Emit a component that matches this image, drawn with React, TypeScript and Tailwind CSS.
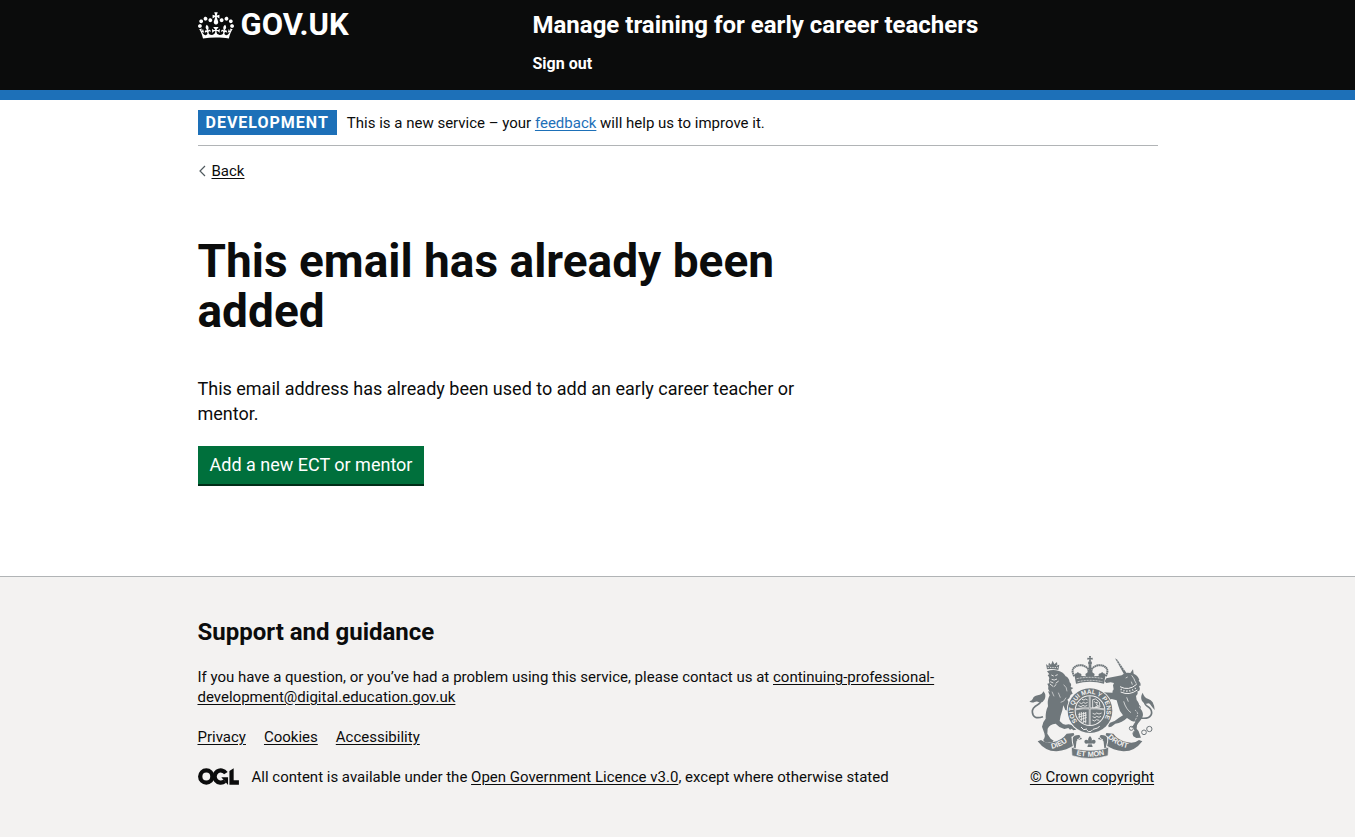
import type { ReactNode } from "react";

function Crown() {
  return (
    <svg viewBox="0 0 132 97" className="h-[27px] w-9 shrink-0" fill="currentColor" aria-hidden="true">
      <path
        fillRule="evenodd"
        d="M25 30.2c3.5 1.5 7.7-.2 9.1-3.7 1.5-3.6-.2-7.8-3.9-9.2-3.6-1.4-7.6.3-9.1 3.9-1.4 3.5.3 7.5 3.9 9zM9 39.5c3.6 1.5 7.8-.2 9.1-3.7 1.5-3.6-.2-7.8-3.9-9.1-3.6-1.5-7.6.2-9.1 3.8-1.4 3.5.3 7.5 3.9 9zM4.4 57.2c3.5 1.5 7.7-.2 9.1-3.8 1.5-3.6-.2-7.7-3.9-9.1-3.5-1.5-7.6.3-9.1 3.8-1.4 3.5.3 7.6 3.9 9.1zm38.3-21.4c3.5 1.5 7.7-.2 9.1-3.8 1.5-3.6-.2-7.7-3.9-9.1-3.6-1.5-7.6.3-9.1 3.8-1.3 3.6.4 7.7 3.9 9.1zm64.4-5.6c-3.6 1.5-7.8-.2-9.1-3.7-1.5-3.6.2-7.8 3.8-9.2 3.6-1.4 7.7.3 9.2 3.9 1.3 3.5-.4 7.5-3.9 9zm15.9 9.3c-3.6 1.5-7.7-.2-9.1-3.7-1.5-3.6.2-7.8 3.7-9.1 3.6-1.5 7.7.2 9.2 3.8 1.5 3.5-.3 7.5-3.8 9zm4.7 17.7c-3.6 1.5-7.8-.2-9.2-3.8-1.5-3.6.2-7.7 3.9-9.1 3.6-1.5 7.7.3 9.2 3.8 1.3 3.5-.4 7.6-3.9 9.1zM89.3 35.8c-3.6 1.5-7.8-.2-9.2-3.8-1.4-3.6.2-7.7 3.9-9.1 3.6-1.5 7.7.3 9.2 3.8 1.4 3.6-.3 7.7-3.9 9.1zM69.7 17.7l8.9 4.7V9.3l-8.9 2.8c-.2-.3-.5-.6-.9-.9L72.4 0H59.6l3.5 11.2c-.3.3-.6.5-.9.9l-8.8-2.8v13.1l8.8-4.7c.3.3.6.7.9.9l-5 15.4v.1c-.2.8-.4 1.6-.4 2.4 0 4.1 3.1 7.5 7 8.1h.2c.3 0 .7.1 1 .1.4 0 .7 0 1-.1h.2c4-.6 7.1-4.1 7.1-8.1 0-.8-.1-1.7-.4-2.4V34l-5.1-15.4c.4-.2.7-.6 1-.9zM66 92.8c16.9 0 32.8 1.1 47.1 3.2 4-16.9 8.9-26.7 14-33.5l-9.6-3.4c1 4.9 1.1 7.2 0 10.2-1.5-1.4-3-4.3-4.2-8.7L108.6 76c2.8-2 5-3.2 7.5-3.3-4.4 9.4-10 11.9-13.6 11.2-4.3-.8-6.3-4.6-5.6-7.9 1-4.7 5.7-5.9 8-.5 4.3-8.7-3-11.4-7.6-8.8 7.1-7.2 7.9-13.5 2.1-21.1-8 6.1-8.1 12.3-4.5 20.8-4.7-5.4-12.1-2.5-9.5 6.2 3.4-5.2 7.9-2 7.2 3.1-.6 4.3-6.4 7.8-13.5 7.2-10.3-.9-10.9-8-11.2-13.8 2.5-.5 7.1 1.8 11 7.3L80.2 60c-4.1 4.4-8 5.3-12.3 5.4 1.4-4.4 8-11.6 8-11.6H55.5s6.4 7.2 7.9 11.6c-4.2-.1-8-1-12.3-5.4l1.4 16.4c3.9-5.5 8.5-7.7 10.9-7.3-.3 5.8-.9 12.8-11.1 13.8-7.2.6-12.9-2.9-13.5-7.2-.7-5 3.8-8.3 7.1-3.1 2.7-8.7-4.6-11.6-9.4-6.2 3.7-8.5 3.6-14.7-4.6-20.8-5.8 7.6-5 13.9 2.2 21.1-4.7-2.6-11.9.1-7.7 8.8 2.3-5.5 7.1-4.2 8.1.5.7 3.3-1.3 7.1-5.7 7.9-3.5.7-9-1.8-13.5-11.2 2.5.1 4.7 1.3 7.5 3.3l-4.7-15.4c-1.2 4.4-2.7 7.2-4.3 8.7-1.1-3-.9-5.3 0-10.2l-9.5 3.4c5 6.9 9.9 16.7 14 33.5 14.8-2.1 30.8-3.2 47.7-3.2z"
      />
    </svg>
  );
}

/* Open Government Licence mark: a ring, an open ring with a bar, and a corner. */
function LicenceMark() {
  return (
    <svg viewBox="0 0 484 196" className="-mt-0.5 h-[17px] w-[41px] shrink-0" role="img" aria-label="Open Government Licence">
      <g fill="none" stroke="currentColor" strokeWidth="51">
        <circle cx="98" cy="98" r="72" />
        <path d="M329 59A72 72 0 1 0 316 152" />
      </g>
      <g fill="currentColor">
        <polygon points="275,106 355,106 355,194 352,194" />
        <polygon points="371,32 421,0 421,143 483,143 483,194 371,194" />
      </g>
    </svg>
  );
}

function RoyalArms() {
  return (
    <svg viewBox="30 27 378 312" className="h-[104px] w-[126px]" fill="#6f777b" aria-hidden="true">
      <defs>
        <path id="garter" d="M175 226A50 50 0 1 1 251 226" />
        <path id="left-scroll" d="M98 308Q132 303 158 274" />
        <path id="mid-scroll" d="M172 327Q213 337 258 326" />
        <path id="right-scroll" d="M266 274Q292 302 336 308" />
      </defs>

      {/* lion */}
      <path d="M84 70L81 54l6 5 3-9 6 6 5-12 5 11 8-7 1 10 6-2-3 16q-18-5-34-2z" />
      <path d="M86 64l31 1M88 57l4 3m20-2l3 1" stroke="#f3f2f1" strokeWidth="2.5" strokeDasharray="4 3" fill="none" />
      <path d="M84 76q17-7 36-1 12 3 20 16 10 4 12 18 7 5 3 14l8 3-7 5 5 12-6 3q-2 9-10 15l9 16 12 8-5 3 7 9-8 3-9-4-12-4-6-14-3 15q-6 16-8 32 8 10 18 11 14-4 22 4l12 7-3 4-9 2-3-5-6 3-5-5-12 3q-16-4-26-16-18 2-24 15l-1 15 10 15 9 6q-3 6-11 5-9 3-17-2-6-4 0-10 3-7 0-15l-7-20q2-15 11-24-1-22 7-37-3-18 5-33l-5-12 5 1q-7-8-4-16l-3-8 6-1q-4-9 0-16l-5-9 5-2z" />
      <path d="M88 92q-8 15-6 28m15-33l7 3m5-1l7-3M98 100q7 5 16-1m-20 8l9 4m7 1l9-7m-26 9l10 8m3 0l5-7" fill="none" stroke="#f3f2f1" strokeWidth="2.6" />
      <path d="M134 116q10 8 10 20m-26 4l6 15m-25-18l6 14m36 4q-5 13-16 14" fill="none" stroke="#f3f2f1" strokeWidth="1.8" />
      <path d="M72 212q-30 10-32-14-1-13 16-22 15-8 14-27" fill="none" stroke="#6f777b" strokeWidth="5" />
      <path d="M73 136q10 9 4 24-6 12-17 9-6-4-13-1-9 4-16-2 8-2 10-7 3-9 15-11 14-2 17-12z" />

      {/* unicorn */}
      <path d="M288 37l7 4 27 39-7 5z" />
      <path d="M293 47l6-4m-2 11l7-4m-2 10l7-5m-2 11l7-5m-2 11l7-5" stroke="#f3f2f1" strokeWidth="1.6" />
      <path d="M308 88l10-7q9-2 16 0l8-11 2 13q12 5 17 18l-2 3q8 7 5 16l-4-1q5 9 0 17l-4-2q2 10-5 16l2 12q9 10 8 23 11 8 11 22-1 11-9 18-6 6-9 13l-1 10q6 5 8 14l5 13-14 1-9-5-2-7 6-8-6-15q2-8 8-13-13-2-25-12-14 14-35 17l-12 9-8 2q-4-7 2-13 16-3 28-15l13-8q-11-12-14-28l-5-17-15-4-13 5 5 10-1 12-10 3-4-7 5-13-12-10 6-8-15 1-8 8-8-3-2-9 7-6 10 2 12-5 30 1 4-10-2-12 3-7-10-2-13 2-5-5 5-9z" />
      <path d="M303 122q26 14 50-7M305 138q26 12 50-6" fill="none" stroke="#f3f2f1" strokeWidth="3" />
      <path d="M305 130q25 13 48-6" fill="none" stroke="#f3f2f1" strokeWidth="5" strokeDasharray="3 6" />
      <path d="M320 96l6-3M338 88l9 13m-2-1l7 13m-15-6l3 9M323 154l5 13m-14-1q7 24 22 34" fill="none" stroke="#f3f2f1" strokeWidth="2.2" />
      <path d="M364 216q32 4 34-15 0-13-13-20-10-6-8-19" fill="none" stroke="#6f777b" strokeWidth="5" />
      <path d="M371 140q-8 13-2 25 6 9 14 8 9-3 12 4 4 6 12 15-1-14-6-23-5-8-13-10-12-3-17-19z" />
      <g fill="none" stroke="#6f777b" strokeWidth="3">
        <circle cx="358" cy="184" r="6" />
        <circle cx="337" cy="247" r="6" />
        <circle cx="349" cy="262" r="7" />
        <circle cx="375" cy="259" r="7" />
        <circle cx="391" cy="249" r="8" />
        <path d="M292 127q-9 2-10 10m11-5q4 14 12 22m54 40q8 8 2 16m-20 30q-2 4-3 6" strokeDasharray="6 3" />
      </g>
      <g fill="none" stroke="#f3f2f1" strokeWidth="2">
        <path d="M348 192q12 8 6 20t-11 24" strokeDasharray="6 3" />
      </g>

      {/* crown */}
      <path d="M210 30h6l-1 6 6-1v6l-6-1 1 6h-6l1-6-6 1v-6l6 1z" />
      <circle cx="213" cy="51" r="6" />
      <path d="M166 91Q153 69 172 60q20-8 36 9l2 21m50 1q13-22-6-31-20-8-36 9l-2 21" fill="none" stroke="#6f777b" strokeWidth="6" strokeDasharray="5 1" />
      <path d="M209 56h8v22h-8z" />
      <path d="M167 91q-2-9 6-9 2-7 8 0 8 0 6 8l14 1q-5-9 4-10 1-9 8-9t8 9q9 1 4 10l14-1q-2-8 6-8 6-7 8 0 8 0 6 9l-4 22q-42-11-84 0z" />
      <path d="M173 98q40-8 80 0M176 107q37-8 74 0" fill="none" stroke="#f3f2f1" strokeWidth="2.2" strokeDasharray="6 3" />

      {/* garter and shield */}
      <circle cx="213" cy="194" r="70" fill="#f3f2f1" />
      <circle cx="213" cy="194" r="67" />
      <circle cx="213" cy="194" r="46" fill="#f3f2f1" />
      <circle cx="213" cy="194" r="43" />
      <path d="M170 190q40-7 86 0M212 151v86" fill="none" stroke="#f3f2f1" strokeWidth="5" />
      <path d="M170 190q40-7 86 0M212 151v86" fill="none" stroke="#6f777b" strokeWidth="1.5" />
      <g fill="none" stroke="#f3f2f1" strokeWidth="2.5">
        <path d="M181 170l7 3 5-4 6 3 7-3M178 179l8 3 6-4 6 3 7-3M189 160l6 2 5-3 6 3M221 161l9-2 11 9 2 15-22 3zM226 166l4 5 5-3-2 9 6 3-10 2" />
        <path d="M181 200v18m6-20v28m7-28v32m6-32v34M178 206l24-5m-24 12l25-6m-21 15l21-8m-13 15l12-4M221 202l7 3 5-4 7 3 8-3M221 212l7 3 5-4 7 3 6-3M220 222l7 3 5-4 9 2" />
      </g>
      <text fill="#f3f2f1" className="font-['Liberation_Sans',sans-serif] text-[19px] font-bold">
        <textPath href="#garter">SOIT QUI MAL Y PENSE</textPath>
      </text>
      <path d="M186 243l8 8 10-2m18 1l14-4 6-6M203 252l6 5 7-1 5-5" fill="none" stroke="#f3f2f1" strokeWidth="3" />

      {/* motto scroll */}
      <path d="M56 286l10-4q13 11 33 7 30-6 44-26l21-2 2 6-8 6 8 24q-22 16-53 19-34 1-57-30z" />
      <path d="M370 286l-10-4q-13 11-33 7-30-6-44-26l-21-2-2 6 8 6-8 24q22 16 53 19 34 1 57-30z" />
      <path d="M161 276q4-10 20-9l8 12-9 2q-8 0-8 8l-2 18-8-2zM265 276q-4-10-20-9l-8 12 9 2q8 0 8 8l2 18 8-2z" />
      <path d="M174 282q8-2 12-11M252 282q-8-2-12-11M159 272q0 16 5 32M267 272q0 16-5 32" fill="none" stroke="#f3f2f1" strokeWidth="3" />
      <path d="M157 303l12 5q44 10 88 0l12-5-2 26q-54 17-108 0z" stroke="#f3f2f1" strokeWidth="2" />
      <path d="M213 270q9 9 4 18 1-7 7-7 8 1 5 9-4 5-11 3l3 10h-16l3-10q-7 2-11-3-3-8 5-9 6 0 7 7-5-9 4-18z" />
      <path d="M203 294h20" stroke="#f3f2f1" strokeWidth="2" />
      <g fill="#f3f2f1" className="font-['Liberation_Sans',sans-serif] text-[22px] font-bold">
        <text><textPath href="#left-scroll">DIEU</textPath></text>
        <text><textPath href="#mid-scroll">ET MON</textPath></text>
        <text><textPath href="#right-scroll">DROIT</textPath></text>
      </g>
    </svg>
  );
}

function Container({ children }: { children: ReactNode }) {
  return (
    <div className="px-4">
      <div className="mx-auto max-w-[960px]">{children}</div>
    </div>
  );
}

function TextLink({ href = "#", children }: { href?: string; children: ReactNode }) {
  return <a href={href} className="underline underline-offset-2">{children}</a>;
}

export default function App() {
  return (
    <div className="flex min-h-screen flex-col bg-white font-['Roboto','Liberation_Sans',sans-serif] text-[15px] leading-5 text-[#0b0c0c]">
      <header className="border-b-10 border-[#1d70b8] bg-[#0b0c0c] pt-2.5 pb-4 text-white">
        <Container>
          <div className="flex flex-col gap-2 md:flex-row md:gap-[15px]">
            <div className="md:w-1/3">
              <a href="#" className="inline-flex h-[30px] items-center gap-[7px]">
                <Crown />
                <span className="text-[31px] leading-[30px] font-bold">GOV.UK</span>
              </a>
            </div>
            <div>
              <a href="#" className="block text-2xl leading-[30px] font-bold">Manage training for early career teachers</a>
              <nav aria-label="Account" className="mt-3.5">
                <a href="#" className="block text-base leading-5 font-bold">Sign out</a>
              </nav>
            </div>
          </div>
        </Container>
      </header>

      <Container>
        <div className="flex items-center gap-2.5 border-b border-[#b1b4b6] py-2.5">
          <strong className="bg-[#1d70b8] px-2 text-base leading-[25px] font-bold tracking-[1px] text-white">DEVELOPMENT</strong>
          <p>
            This is a new service – your <a href="#" className="text-[#1d70b8] underline underline-offset-2">feedback</a> will help us to improve it.
          </p>
        </div>
        <a href="#" className="mt-[15px] inline-flex items-center gap-1.5 align-top">
          <svg viewBox="0 0 8 12" className="h-3 w-2" fill="none" stroke="#505a5f" strokeWidth="1.2" aria-hidden="true">
            <path d="M7 1L2 6l5 5" />
          </svg>
          <span className="underline underline-offset-2">Back</span>
        </a>
      </Container>

      <Container>
        <main className="max-w-[630px] pt-[55px] pb-[90px] md:w-2/3">
          <h1 className="mb-10 text-[46px] leading-[50px] font-bold">This email has already been added</h1>
          <p className="mb-5 text-lg leading-[25px]">
            This email address has already been used to add an early career teacher or mentor.
          </p>
          <button type="button" className="mb-0.5 block h-[38px] cursor-pointer bg-[#00703c] px-3 text-lg text-white shadow-[0_2px_0_#002d18]">
            Add a new ECT or mentor
          </button>
        </main>
      </Container>

      <footer className="grow border-t border-[#b1b4b6] bg-[#f3f2f1] pt-10 pb-10">
        <Container>
          <div className="flex flex-col gap-8 md:flex-row md:items-end">
            <div className="grow">
              <h2 className="mb-5 text-2xl leading-[30px] font-bold">Support and guidance</h2>
              <p className="mb-5">
                If you have a question, or you’ve had a problem using this service, please contact us at{" "}
                <TextLink href="mailto:continuing-professional-development@digital.education.gov.uk">
                  continuing-professional-development@digital.education.gov.uk
                </TextLink>
              </p>
              <ul className="mb-5 flex flex-wrap gap-x-[18px]">
                <li><TextLink>Privacy</TextLink></li>
                <li><TextLink>Cookies</TextLink></li>
                <li><TextLink>Accessibility</TextLink></li>
              </ul>
              <div className="flex items-center gap-[13px]">
                <LicenceMark />
                <p>
                  All content is available under the <TextLink>Open Government Licence v3.0</TextLink>, except where otherwise stated
                </p>
              </div>
            </div>
            <a href="#" className="flex w-[131px] shrink-0 flex-col items-center gap-2 self-start underline underline-offset-2 md:self-auto">
              <RoyalArms />
              <span>© Crown copyright</span>
            </a>
          </div>
        </Container>
      </footer>
    </div>
  );
}
